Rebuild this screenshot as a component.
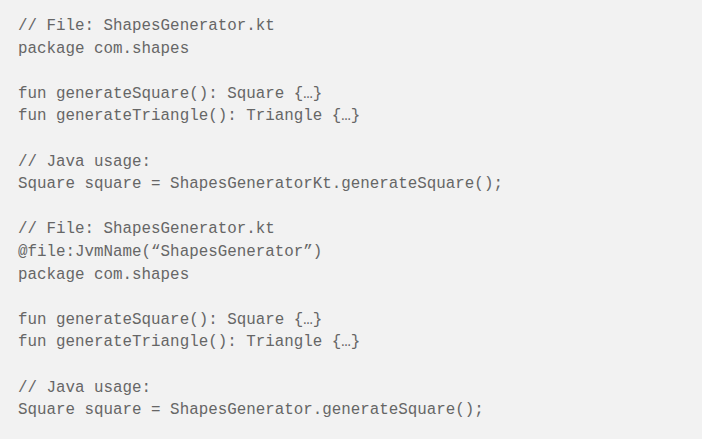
const LINES = [
  '// File: ShapesGenerator.kt',
  'package com.shapes',
  '',
  'fun generateSquare(): Square {…}',
  'fun generateTriangle(): Triangle {…}',
  '',
  '// Java usage:',
  'Square square = ShapesGeneratorKt.generateSquare();',
  '',
  '// File: ShapesGenerator.kt',
  '@file:JvmName(“ShapesGenerator”)',
  'package com.shapes',
  '',
  'fun generateSquare(): Square {…}',
  'fun generateTriangle(): Triangle {…}',
  '',
  '// Java usage:',
  'Square square = ShapesGenerator.generateSquare();',
]

export default function App() {
  return (
    <main className="w-[702px] h-[439px] bg-[#f2f2f2] overflow-hidden">
      <pre
        className="px-[18px] pt-[15px] text-[15.85px] leading-[22.6px] text-[#666666] whitespace-pre"
        style={{ fontFamily: '"Liberation Mono", "Courier New", monospace' }}
      >
        {LINES.map((line, i) => (
          <div key={i} className="h-[22.6px]">{line}</div>
        ))}
      </pre>
    </main>
  )
}
